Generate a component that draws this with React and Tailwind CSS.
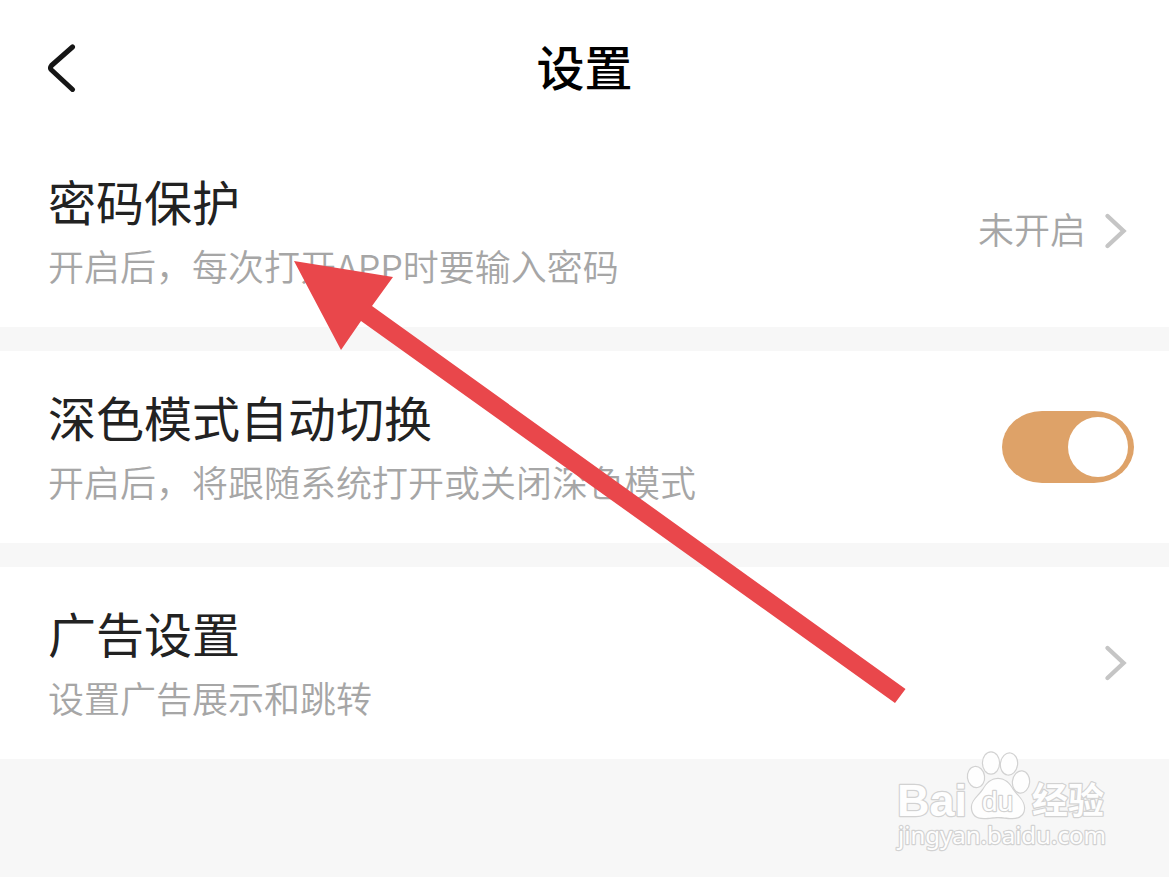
import { useState } from 'react';

const ChevronRight = () => (
  <svg className="w-9 h-12 shrink-0" viewBox="0 0 36 48" fill="none" aria-hidden="true">
    <path d="M9.5 9 L25.5 24 L9.5 39" stroke="#c5c5c5" strokeWidth="4.4" strokeLinecap="round" strokeLinejoin="miter" />
  </svg>
);

const SettingText = ({ title, description }) => (
  <span className="block min-w-0 flex-1 pb-[6px] text-left">
    <span className="block text-5xl leading-[74px] text-[#222222]">{title}</span>
    <span className="block text-4xl leading-[56px] font-[350] text-[#a6a6a6]">{description}</span>
  </span>
);

const LinkRow = ({ title, description, value }) => (
  <button type="button" className="flex w-full items-center bg-white py-7 pl-12 pr-[35px]">
    <SettingText title={title} description={description} />
    {value && <span className="mr-3 pb-[6px] text-4xl font-[350] text-[#a6a6a6]">{value}</span>}
    <ChevronRight />
  </button>
);

const SwitchRow = ({ title, description, checked, onChange }) => (
  <label className="flex w-full items-center bg-white py-7 pl-12 pr-[35px]">
    <SettingText title={title} description={description} />
    <input
      type="checkbox"
      role="switch"
      checked={checked}
      onChange={(e) => onChange(e.target.checked)}
      className="flex h-[72px] w-[132px] shrink-0 appearance-none items-center rounded-[40px/36px] bg-gray-200 px-[6px] before:size-[60px] before:rounded-full before:bg-white before:content-[''] checked:justify-end checked:bg-[#dea268]"
    />
  </label>
);

// Red pointer towards the password row
const Pointer = () => (
  <svg
    className="pointer-events-none absolute left-[294px] top-[261px] h-[442px] w-[612px]"
    viewBox="0 0 612 442"
    aria-hidden="true"
  >
    <path d="M0 0 L99 16 L78 45 L611.5 428 L601 442 L67 60 L47 89 Z" fill="#e9474b" />
  </svg>
);

const Watermark = () => (
  <svg
    className="pointer-events-none absolute bottom-[22px] right-[57px] h-[105px] w-[220px]"
    viewBox="0 0 220 105"
    fill="#fefefe"
    stroke="#d2d2d2"
    strokeWidth="2.4"
    paintOrder="stroke"
    strokeLinejoin="round"
  >
    <text x="5" y="66" fontSize="45" fontWeight="700" fontFamily="'Liberation Sans', Arial, sans-serif">Bai</text>
    <ellipse cx="84" cy="27" rx="8" ry="10" transform="rotate(-8 84 27)" />
    <ellipse cx="99" cy="13" rx="8" ry="10.5" />
    <ellipse cx="117" cy="14" rx="8" ry="10.5" transform="rotate(8 117 14)" />
    <ellipse cx="129" cy="32" rx="8" ry="10.5" transform="rotate(6 129 32)" />
    <path d="M106 29 C113 29 117 33 121 40 C125 46 132 50 132 58 C132 65 127 68 120 68 C114 68 111 67 106 67 C101 67 98 68 92 68 C85 68 80 65 80 57 C80 50 87 46 91 40 C95 33 99 29 106 29 Z" />
    <text x="90" y="61" fontSize="28" fontFamily="'Liberation Sans', Arial, sans-serif">du</text>
    <text x="140" y="64" fontSize="36" fontWeight="700" fontFamily="'Noto Sans CJK SC', sans-serif">经验</text>
    <text x="6" y="94" fontSize="24" fontFamily="'Noto Sans', sans-serif">jingyan.baidu.com</text>
  </svg>
);

const App = () => {
  const [autoDark, setAutoDark] = useState(true);

  return (
    <div className="relative min-h-screen overflow-hidden bg-[#f7f7f7] font-['Noto_Sans_CJK_SC',sans-serif]">
      <header className="grid h-[135px] grid-cols-[1fr_auto_1fr] items-center bg-white px-9">
        <button type="button" aria-label="返回" className="size-12">
          <svg className="size-12" viewBox="0 0 48 48" fill="none" aria-hidden="true">
            <path d="M36.5 3 L15.5 21.5 Q13.5 24 15.5 26 L36.5 45.5" stroke="#161616" strokeWidth="5" strokeLinecap="round" strokeLinejoin="round" />
          </svg>
        </button>
        <h1 className="pb-[6px] text-5xl font-medium text-black">设置</h1>
      </header>

      <main className="flex flex-col gap-6">
        <LinkRow title="密码保护" description="开启后，每次打开APP时要输入密码" value="未开启" />
        <SwitchRow
          title="深色模式自动切换"
          description="开启后，将跟随系统打开或关闭深色模式"
          checked={autoDark}
          onChange={setAutoDark}
        />
        <LinkRow title="广告设置" description="设置广告展示和跳转" />
      </main>

      <Pointer />
      <Watermark />
    </div>
  );
};

export default App;
